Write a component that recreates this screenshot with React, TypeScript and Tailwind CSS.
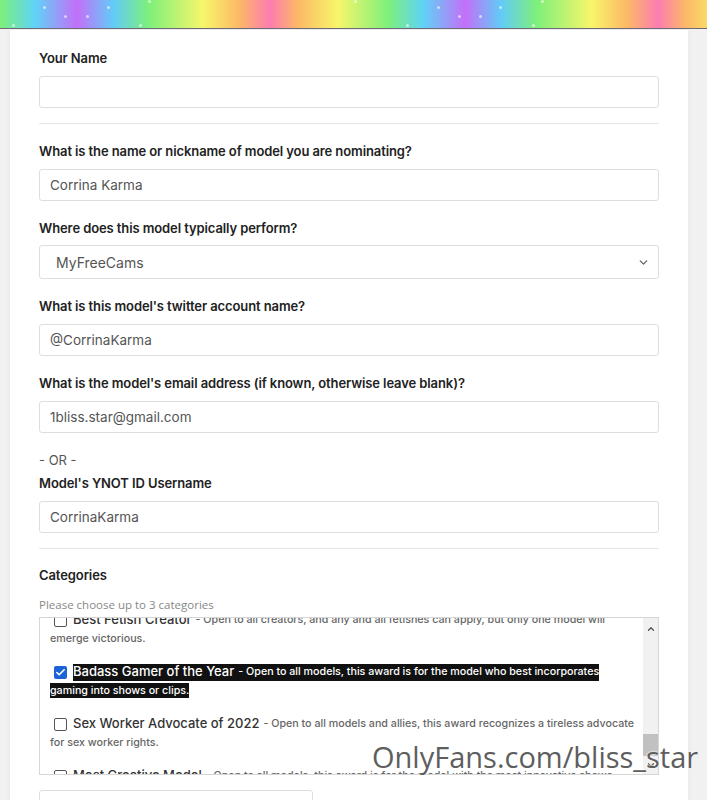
import { ChevronDown, ChevronUp, Check } from 'lucide-react';

const stars = [
  'left-[12px] top-[24px]', 'left-[43px] top-[6px]', 'left-[64px] top-[15px]', 'left-[86px] top-[15px]',
  'left-[107px] top-[6px]', 'left-[139px] top-[24px]', 'left-[148px] top-[0px]', 'left-[354px] top-[0px]',
  'left-[406px] top-[24px]', 'left-[437px] top-[6px]', 'left-[458px] top-[15px]', 'left-[479px] top-[15px]',
  'left-[499px] top-[6px]', 'left-[532px] top-[24px]', 'left-[541px] top-[0px]',
];

const labelCls = "block h-5 text-[13px] leading-5 font-semibold text-[#222] font-['Inter',sans-serif] tracking-[-0.1px]";
const inputCls = "block w-full h-8 rounded-[3px] border border-[#dedede] bg-white px-[10px] text-[13.5px] text-[#555] font-['Inter',sans-serif] outline-none";

const Field = ({ label, value, className = '' }: { label: string; value: string; className?: string }) => (
  <div className={className}>
    <label className={labelCls}>{label}</label>
    <input readOnly value={value} className={`${inputCls} mt-2`} />
  </div>
);

const categories = [
  { title: 'Best Fetish Creator', desc: 'Open to all creators, and any and all fetishes can apply, but only one model will', rest: 'emerge victorious.', checked: false },
  { title: 'Badass Gamer of the Year', desc: 'Open to all models, this award is for the model who best incorporates', rest: 'gaming into shows or clips.', checked: true },
  { title: 'Sex Worker Advocate of 2022', desc: 'Open to all models and allies, this award recognizes a tireless advocate', rest: 'for sex worker rights.', checked: false },
  { title: 'Most Creative Model', desc: 'Open to all models, this award is for the model with the most innovative shows', rest: 'and content ideas.', checked: false },
];

export default function App() {
  return (
    <div className="relative min-h-[800px] bg-[#f1f1f1] overflow-hidden font-['Inter',sans-serif]">
      {/* rainbow header */}
      <div className="relative h-[29px] border-b border-[#6f6a78] bg-[repeating-linear-gradient(90deg,#7ef07a_0px,#5fd3f7_35px,#c36ff8_77px,#62cbf8_113px,#7ef07a_149px,#f7f66b_203px,#fcb966_239px,#fc7cb1_270px,#fcb966_298px,#f7f66b_338px,#7ef07a_388px)]">
        {stars.map((s) => (
          <span key={s} className={`absolute ${s} w-[3px] h-[3px] rounded-full bg-white/60 blur-[0.5px]`} />
        ))}
      </div>

      <div className="ml-[10px] mr-[19px] mt-[1px] bg-white px-[29px] pt-[18px] pb-4 shadow-[0_0_6px_rgba(0,0,0,0.05)]">
        <Field label="Your Name" value="" />
        <hr className="mt-[15px] border-[#e6e6e6]" />

        <Field className="mt-[17px]" label="What is the name or nickname of model you are nominating?" value="Corrina Karma" />

        <div className="mt-[17px]">
          <label className={labelCls}>Where does this model typically perform?</label>
          <div className="mt-[7px] h-[34px] rounded-[3px] border border-[#dedede] flex items-center justify-between pl-4 pr-2 text-[14px] text-[#555]">
            <span>MyFreeCams</span>
            <ChevronDown className="w-[13px] h-[13px] text-[#666]" strokeWidth={2.5} />
          </div>
        </div>

        <Field className="mt-[17px]" label="What is this model's twitter account name?" value="@CorrinaKarma" />
        <Field className="mt-[17px]" label="What is the model's email address (if known, otherwise leave blank)?" value="1bliss.star@gmail.com" />

        <div className="mt-[17px] h-5 leading-5 text-[13px] text-[#555]">- OR -</div>
        <Field className="mt-[3px]" label="Model's YNOT ID Username" value="CorrinaKarma" />
        <hr className="mt-[15px] border-[#e6e6e6]" />

        <div className={`${labelCls} mt-4`}>Categories</div>
        <div className="mt-3 h-4 leading-4 text-[11.5px] text-[#888] font-['Open_Sans',sans-serif]">Please choose up to 3 categories</div>

        <div className="mt-1 h-[158px] border border-[#d6d6d6] flex overflow-hidden">
          <div className="flex-1 min-w-0 overflow-hidden pl-[10px]">
            <div className="-mt-[7px]">
              {categories.map((c) => (
                <div key={c.title} className="mb-4 text-[10.7px] font-medium">
                  <div className="h-[18px] flex items-center whitespace-nowrap">
                    {c.checked ? (
                      <span className="ml-1 shrink-0 w-[13px] h-[13px] rounded-[2px] bg-[#1e63d6] flex items-center justify-center">
                        <Check className="w-[11px] h-[11px] text-white" strokeWidth={3.5} />
                      </span>
                    ) : (
                      <span className="ml-1 shrink-0 w-[13px] h-[13px] rounded-[2px] border border-[#555] bg-white" />
                    )}
                    <span className={`ml-[6px] h-[17px] flex items-center ${c.checked ? 'bg-[#111] text-white' : 'text-[#666]'}`}>
                      <span className={`text-[13px] ${c.checked ? 'text-white' : 'text-[#333]'}`}>{c.title}</span>
                      <span className="ml-1">- {c.desc}</span>
                    </span>
                  </div>
                  <div className="h-[18px] flex items-center">
                    <span className={`h-[15px] leading-[15px] ${c.checked ? 'bg-[#111] text-white' : 'text-[#666]'}`}>{c.rest}</span>
                  </div>
                </div>
              ))}
            </div>
          </div>
          <div className="w-[15px] shrink-0 bg-[#f1f1f1] flex flex-col items-center">
            <ChevronUp className="mt-[6px] w-[10px] h-[10px] text-[#505050]" strokeWidth={3} />
            <div className="mt-[100px] w-full h-[22px] bg-[#c1c1c1]" />
            <ChevronDown className="mt-auto mb-[4px] w-[10px] h-[10px] text-[#505050]" strokeWidth={3} />
          </div>
        </div>

        <div className="mt-[15px] w-[274px] h-10 rounded-[3px] border border-[#dedede]" />
      </div>

      {/* watermark */}
      <div className="absolute left-[372px] top-[742px] text-[29px] leading-none text-[#5e5e5e] font-['Open_Sans',sans-serif] [text-shadow:0_0_2px_#fff,0_0_2px_#fff]">
        OnlyFans.com/bliss_star
      </div>
    </div>
  );
}
